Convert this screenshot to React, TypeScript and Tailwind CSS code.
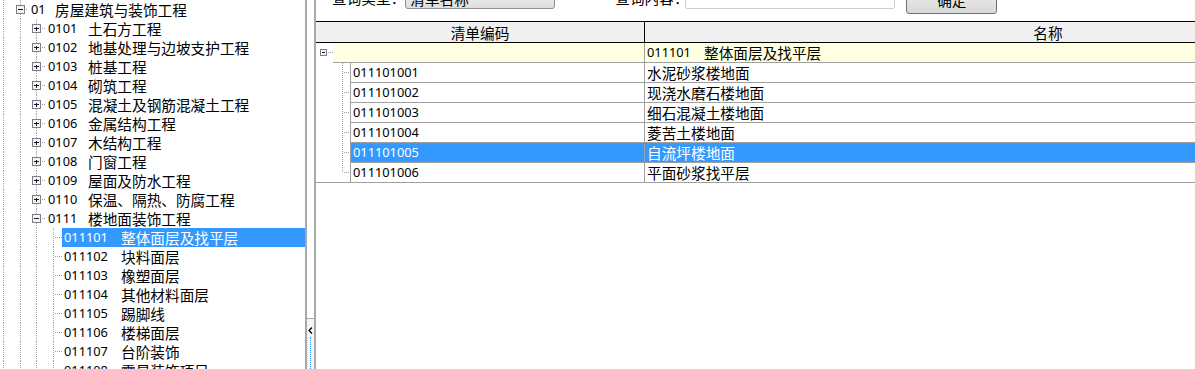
import clsx from "clsx";

type Kind = "none" | "line" | "tee" | "end" | "plus" | "minus";

const DOT = "#a0a0a0";

// one indent column of a tree: dotted guide, optional +/- box
function Guide({
  w,
  cx,
  h = 19,
  kind,
  stem = true,
  r = 4,
}: {
  w: number;
  cx: number;
  h?: number;
  kind: Kind;
  stem?: boolean;
  r?: number;
}) {
  const x = cx + 0.5;
  const my = 9.5;
  const box = kind === "plus" || kind === "minus";
  return (
    <svg width={w} height={h} className="block shrink-0" shapeRendering="crispEdges">
      {(kind === "line" || kind === "tee" || (box && stem)) && (
        <line x1={x} y1={0} x2={x} y2={h} stroke={DOT} strokeDasharray="1 1" />
      )}
      {kind === "end" && <line x1={x} y1={0} x2={x} y2={my} stroke={DOT} strokeDasharray="1 1" />}
      {(kind === "tee" || kind === "end") && (
        <line x1={cx + 2} y1={my} x2={w} y2={my} stroke={DOT} strokeDasharray="1 1" />
      )}
      {box && (
        <>
          <line x1={cx + r + 2} y1={my} x2={w} y2={my} stroke={DOT} strokeDasharray="1 1" />
          <rect
            x={cx - r + 0.5}
            y={my - r}
            width={r * 2}
            height={r * 2}
            fill="#f4f4f4"
            stroke="#7c7e80"
          />
          <line x1={cx - r + 2} y1={my} x2={cx + r - 1} y2={my} stroke="#10183f" />
          {kind === "plus" && (
            <line x1={x} y1={my - r + 2} x2={x} y2={my + r - 1.5} stroke="#10183f" />
          )}
        </>
      )}
    </svg>
  );
}

type Node = { code: string; name: string; level: 0 | 1 | 2; icon?: "plus" | "minus"; sel?: boolean };

const tree: Node[] = [
  { code: "01", name: "房屋建筑与装饰工程", level: 0, icon: "minus" },
  { code: "0101", name: "土石方工程", level: 1, icon: "plus" },
  { code: "0102", name: "地基处理与边坡支护工程", level: 1, icon: "plus" },
  { code: "0103", name: "桩基工程", level: 1, icon: "plus" },
  { code: "0104", name: "砌筑工程", level: 1, icon: "plus" },
  { code: "0105", name: "混凝土及钢筋混凝土工程", level: 1, icon: "plus" },
  { code: "0106", name: "金属结构工程", level: 1, icon: "plus" },
  { code: "0107", name: "木结构工程", level: 1, icon: "plus" },
  { code: "0108", name: "门窗工程", level: 1, icon: "plus" },
  { code: "0109", name: "屋面及防水工程", level: 1, icon: "plus" },
  { code: "0110", name: "保温、隔热、防腐工程", level: 1, icon: "plus" },
  { code: "0111", name: "楼地面装饰工程", level: 1, icon: "minus" },
  { code: "011101", name: "整体面层及找平层", level: 2, sel: true },
  { code: "011102", name: "块料面层", level: 2 },
  { code: "011103", name: "橡塑面层", level: 2 },
  { code: "011104", name: "其他材料面层", level: 2 },
  { code: "011105", name: "踢脚线", level: 2 },
  { code: "011106", name: "楼梯面层", level: 2 },
  { code: "011107", name: "台阶装饰", level: 2 },
  { code: "011108", name: "零星装饰项目", level: 2 },
];

const codeW = ["w-[24px]", "w-[40px]", "w-[57px]"];

// digits are 7.33px wide in the original, Noto Sans at 12.8px gives that
const mono = "font-['Noto_Sans',sans-serif] text-[12.8px]";

function TreeRow({ n }: { n: Node }) {
  return (
    <div className="flex h-[19px] items-center whitespace-nowrap">
      <Guide w={12} cx={3} kind="line" />
      {n.level === 0 ? (
        <Guide w={16} cx={8} kind={n.icon!} />
      ) : (
        <Guide w={16} cx={8} kind="line" />
      )}
      {n.level === 1 && <Guide w={17} cx={8} kind={n.icon!} />}
      {n.level === 2 && (
        <>
          <Guide w={17} cx={8} kind="line" />
          <Guide w={17} cx={8} kind="tee" />
        </>
      )}
      <div
        className={clsx(
          "flex h-[19px] flex-1 items-center",
          n.level === 2 ? "pl-[2px]" : "pl-[3px]",
          n.sel && "bg-[#3399ff] text-white"
        )}
      >
        <span className={clsx(codeW[n.level], mono, "shrink-0")}>{n.code}</span>
        <span>{n.name}</span>
      </div>
    </div>
  );
}

const items = [
  ["011101001", "水泥砂浆楼地面"],
  ["011101002", "现浇水磨石楼地面"],
  ["011101003", "细石混凝土楼地面"],
  ["011101004", "菱苦土楼地面"],
  ["011101005", "自流坪楼地面"],
  ["011101006", "平面砂浆找平层"],
];

function QueryBar() {
  return (
    <div className="-mt-[16px] flex h-[37px] items-start whitespace-nowrap">
      <span className="ml-[16px] mt-[3px] leading-[22px]">查询类型：</span>
      <div className="mt-[3px] flex h-[22px] w-[150px] shrink-0 items-center justify-between rounded-[3px] border border-[#8e8f8f] bg-linear-to-b from-[#f4f4f4] to-[#dedede] pl-[4px] pr-[6px]">
        <span>清单名称</span>
        <svg width="7" height="4" className="block">
          <path d="M0 0 L7 0 L3.5 4 Z" fill="#333" />
        </svg>
      </div>
      <span className="ml-[60px] mt-[3px] w-[70px] shrink-0 leading-[22px]">查询内容：</span>
      <div className="mt-[3px] h-[22px] w-[210px] shrink-0 rounded-[2px] border border-[#cfcfcf] bg-white" />
      <button className="ml-[11px] h-[30px] w-[91px] shrink-0 rounded-[3px] border border-[#707070] bg-linear-to-b from-[#f3f3f3] to-[#d8d8d8] leading-[19px]">
        确定
      </button>
    </div>
  );
}

function Grid() {
  return (
    <div className="w-[1136px]">
      <div className="flex h-[22px] border-y border-black bg-[#f0f0f0]">
        <div className="flex w-[329px] shrink-0 items-center justify-center border-r border-black">清单编码</div>
        <div className="flex w-[806px] shrink-0 items-center justify-center">名称</div>
      </div>

      <div className="flex h-[20px]">
        <Guide w={17} cx={7} h={20} kind="minus" stem={false} r={3} />
        <div className="w-[312px] shrink-0 border-r border-b border-[#a0a0a0] bg-[#ffffe1]" />
        <div className="flex w-[806px] shrink-0 items-center border-b border-[#a0a0a0] bg-[#ffffe1] pl-[2px] whitespace-nowrap">
          <span className={clsx(mono, "w-[57px] shrink-0")}>011101</span>
          <span>整体面层及找平层</span>
        </div>
      </div>

      {items.map(([code, name], i) => {
        const last = i === items.length - 1;
        const sel = code === "011101005";
        return (
          <div key={code} className="flex h-[20px] whitespace-nowrap">
            <div className={clsx("h-[20px] w-[34px] shrink-0", last && "border-b border-[#a0a0a0]")}>
              <Guide w={34} cx={26} h={last ? 19 : 20} kind={last ? "end" : "tee"} />
            </div>
            <div className={clsx("relative flex", sel && "text-white")}>
              <div
                className={clsx(
                  "flex w-[295px] shrink-0 items-center border-x border-b border-[#a0a0a0] pl-[2px]",
                  sel && "bg-[#3399ff]"
                )}
              >
                <span className={mono}>{code}</span>
              </div>
              <div
                className={clsx(
                  "flex w-[806px] shrink-0 items-center border-b border-[#a0a0a0] pl-[2px]",
                  sel && "bg-[#3399ff]"
                )}
              >
                {name}
              </div>
              {sel && (
                <span className="pointer-events-none absolute top-0 right-0 bottom-[1px] left-[1px] border border-dotted border-[#c0803a]" />
              )}
            </div>
          </div>
        );
      })}
    </div>
  );
}

export default function App() {
  return (
    <div className="flex h-[369px] w-[1195px] overflow-hidden bg-white text-[14.67px] leading-[19px] text-black font-['Noto_Sans_CJK_SC',sans-serif]">
      <div className="w-[307px] shrink-0 overflow-hidden border-r-2 border-[#a8a8a8]">
        {tree.map((n) => (
          <TreeRow key={n.code} n={n} />
        ))}
      </div>

      <div className="flex w-[7px] shrink-0 flex-col">
        <div className="flex-1" />
        <div className="flex h-[51px] flex-col items-center border-t border-[#a8a8a8] bg-[#f6f6f6] pt-[8px]">
          <svg width="5" height="7" className="block">
            <path d="M4 0.5 L1 3.5 L4 6.5" stroke="#000" strokeWidth="1.3" fill="none" />
          </svg>
          <div className="mt-[3px] flex-1 border-l border-dotted border-[#3399ff]" />
        </div>
      </div>

      <div className="min-w-0 flex-1 overflow-hidden border-l-2 border-[#a8a8a8]">
        <QueryBar />
        <Grid />
      </div>
    </div>
  );
}
